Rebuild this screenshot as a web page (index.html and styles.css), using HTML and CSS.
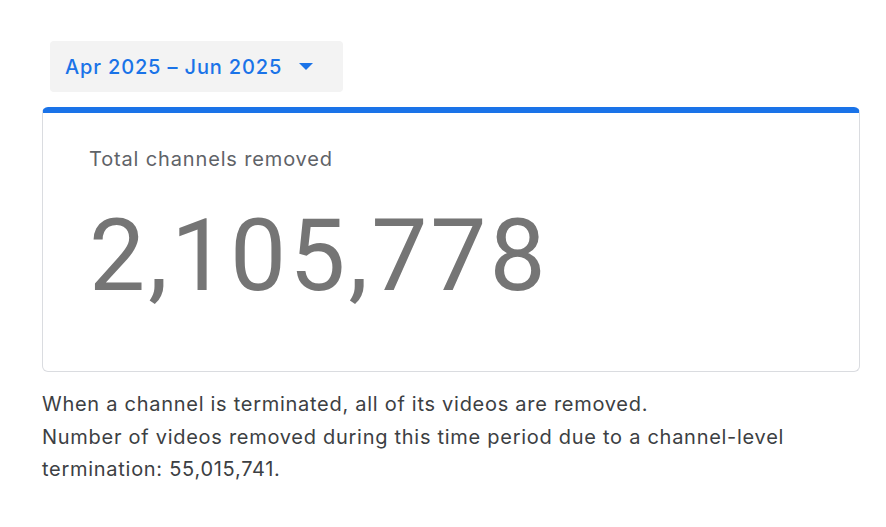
FILE: index.html
```html
<!DOCTYPE html>
<html>
<head>
  <title>Channels removed</title>
  <link rel="stylesheet" href="styles.css">
</head>
<body>

  <div class="page">

    <button class="range-picker">
      <span class="range-label">Apr 2025 – Jun 2025</span>
      <svg class="caret" width="14" height="7" viewBox="0 0 14 7"><path d="M0 0h14L7 7z" fill="currentColor"/></svg>
    </button>

    <section class="stat-card">
      <h2 class="stat-title">Total channels removed</h2>
      <div class="stat-value">2,105,778</div>
    </section>

    <p class="note">
      When a channel is terminated, all of its videos are removed.<br>
      Number of videos removed during this time period due to a channel-level termination: 55,015,741.
    </p>

  </div>

</body>
</html>
```

FILE: styles.css
```css
* {
  box-sizing: border-box;
}

html, body {
  margin: 0;
  padding: 0;
  background: #fff;
  font-family: Inter, Roboto, sans-serif;
}

.page {
  padding: 41px 26px 0 42px;
}

.range-picker {
  display: inline-flex;
  align-items: center;
  gap: 17px;
  height: 51px;
  margin-left: 8px;
  padding: 0 30px 0 15px;
  border: none;
  border-radius: 4px;
  background: #f3f3f3;
  color: #1a73e8;
  font-family: inherit;
  font-size: 20px;
  font-weight: 500;
  letter-spacing: 0.85px;
  cursor: pointer;
}

.caret {
  display: block;
}

.stat-card {
  margin-top: 15px;
  height: 265px;
  padding: 32px 46px 0;
  border: 1px solid #dadce0;
  border-top: 6px solid #1a73e8;
  border-radius: 6px;
}

.stat-title {
  margin: 0;
  font-size: 20px;
  font-weight: 400;
  line-height: 28px;
  letter-spacing: 0.85px;
  color: #5f6368;
}

.stat-value {
  margin-top: 23px;
  font-family: Roboto, sans-serif;
  font-size: 100px;
  line-height: 120px;
  letter-spacing: 3px;
  color: #757575;
}

.note {
  margin: 16px 0 0;
  max-width: 800px;
  font-size: 20px;
  line-height: 32.5px;
  letter-spacing: 0.72px;
  color: #3c4043;
}
```
